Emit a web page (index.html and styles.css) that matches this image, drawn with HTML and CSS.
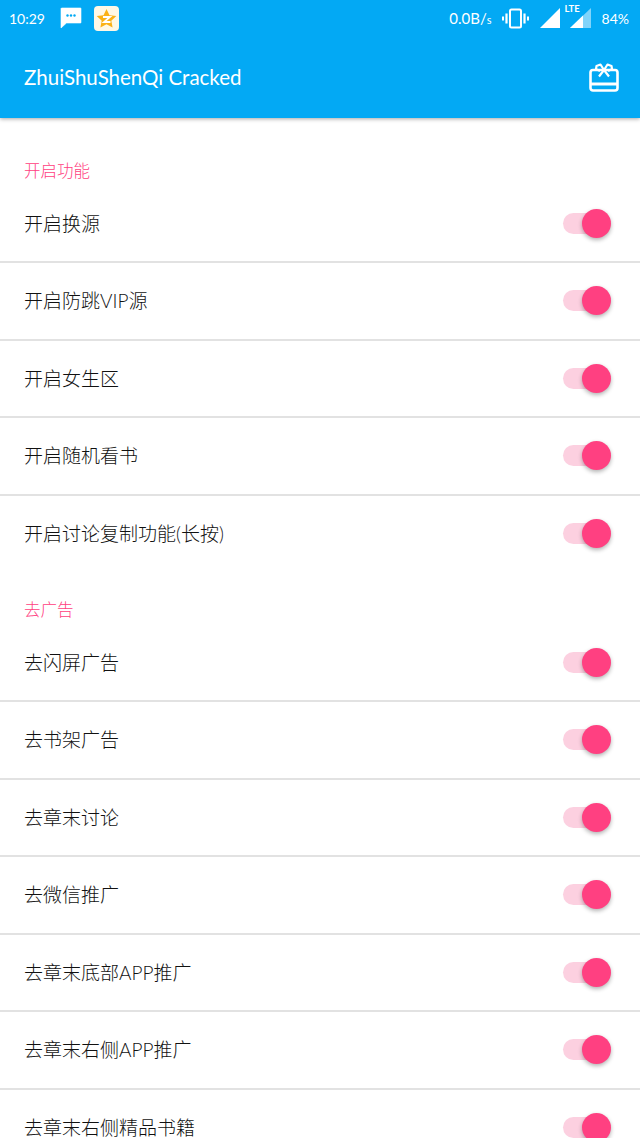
FILE: index.html
```html
<!DOCTYPE html>
<html lang="zh">
<head>
<meta charset="utf-8">
<title>ZhuiShuShenQi Cracked</title>
<link rel="stylesheet" href="styles.css">
</head>
<body>
<div class="header">
  <div class="status">
    <span class="time">10:29</span>
    <svg class="ic-msg" width="22" height="22" viewBox="0 0 22 22"><path d="M1.500 1h19a.5.5 0 0 1 .5.5v14a.5.5 0 0 1-.5.5H6.500L1 21V1.500z" fill="#fff" stroke="#fff" stroke-width=".6" stroke-linejoin="round"/><circle cx="7.500" cy="8.500" r="1.200" fill="#03a9f4"/><circle cx="11" cy="8.500" r="1.200" fill="#03a9f4"/><circle cx="14.500" cy="8.500" r="1.200" fill="#03a9f4"/></svg>
    <svg class="ic-qz" width="25" height="25" viewBox="0 0 25 25"><rect width="25" height="25" rx="4" fill="#fff8e6"/><path d="M12.500 3l3 6.200 6.800.9-5 4.700 1.300 6.700-6.100-3.300-6.100 3.300 1.300-6.700-5-4.700 6.800-.9z" fill="#fbb116"/><path d="M9 11h7l-6 5h6.500" fill="none" stroke="#fff" stroke-width="1.800"/></svg>
    <span class="spacer"></span>
    <span class="speed">0.0B/<small>s</small></span>
    <svg class="ic-vib" width="27" height="21" viewBox="0 0 27 21"><rect x="8" y="1.500" width="11" height="18" rx="1.500" fill="none" stroke="#fff" stroke-width="2"/><path d="M4.500 5.500v10M22.500 5.500v10" stroke="#fff" stroke-width="2.200"/><path d="M1 8.500v4M26 8.500v4" stroke="#fff" stroke-width="2"/></svg>
    <svg class="ic-sig" width="20" height="20" viewBox="0 0 20 20"><path d="M20 0v20H0z" fill="#fff"/></svg>
    <span class="lte-wrap">
      <span class="lte">LTE</span>
      <svg width="21" height="20" viewBox="0 0 21 20"><path d="M21 0v20H0z" fill="#81d4fa"/><path d="M13 7.600V20H0z" fill="#fff"/></svg>
    </span>
    <span class="batt">84%</span>
  </div>
  <div class="toolbar">
    <span class="title">ZhuiShuShenQi Cracked</span>
    <svg width="30" height="30" viewBox="0 0 30 30" fill="none" stroke="#fff" stroke-width="2.600" stroke-linejoin="round"><rect x="1.500" y="8" width="27" height="20.500" rx="2.500"/><path d="M1.500 22h27" stroke-width="3"/><path d="M15 8l-3.500-5.500-4 1.500-.5 3 4 2M15 8l3.500-5.500 4 1.500.5 3-4 2M15 8l-5 6.500M15 8l5 6.500" stroke-width="2.200"/></svg>
  </div>
</div>

<div class="group-title first">开启功能</div>
<div class="row"><span>开启换源</span><span class="switch"></span></div>
<div class="row"><span>开启防跳VIP源</span><span class="switch"></span></div>
<div class="row"><span>开启女生区</span><span class="switch"></span></div>
<div class="row"><span>开启随机看书</span><span class="switch"></span></div>
<div class="row last"><span>开启讨论复制功能(长按)</span><span class="switch"></span></div>

<div class="group-title">去广告</div>
<div class="row"><span>去闪屏广告</span><span class="switch"></span></div>
<div class="row"><span>去书架广告</span><span class="switch"></span></div>
<div class="row"><span>去章末讨论</span><span class="switch"></span></div>
<div class="row"><span>去微信推广</span><span class="switch"></span></div>
<div class="row"><span>去章末底部APP推广</span><span class="switch"></span></div>
<div class="row"><span>去章末右侧APP推广</span><span class="switch"></span></div>
<div class="row"><span>去章末右侧精品书籍</span><span class="switch"></span></div>
</body>
</html>
```

FILE: styles.css
```css
/* settings screen */

html, body
{ margin: 0;
height: 1138px;
overflow: hidden;
}

body
{ background-color: #fff;
font-family: "Lato", "Noto Sans CJK SC", sans-serif;
color: #111;
}

.header
{ background-color: #03a9f4;
height: 118px;
color: #fff;
box-shadow: 0 1px 4px rgba(0,0,0,0.35);
position: relative;
}

.status
{ height: 36px;
display: flex;
align-items: center;
padding: 0 11px 0 9px;
font-size: 14px;
}

.ic-msg { margin-left: 15px; }
.ic-qz { margin-left: 12px; }
.spacer { flex: 1; }
.speed { font-size: 15px; }
.speed small { font-size: 11px; }
.ic-vib { margin-left: 10px; }
.ic-sig { margin-left: 11px; }

.lte-wrap
{ position: relative;
margin-left: 10px;
height: 20px;
}

.lte
{ position: absolute;
left: -5px;
top: -5px;
font-size: 9.500px;
font-weight: 700;
}

.batt { margin-left: 11px; }

.toolbar
{ height: 82px;
display: flex;
align-items: center;
justify-content: space-between;
padding: 0 21px 0 24px;
}

.title
{ font-size: 20.500px;
}

.group-title
{ color: #ff4081;
font-size: 16.500px;
font-weight: 300;
line-height: 20px;
height: 20px;
padding: 0 24px;
margin-top: 27px;
}

.group-title.first { margin-top: 43px; }

.row
{ box-sizing: border-box;
height: 77.500px;
border-bottom: 2px solid #e2e2e2;
display: flex;
align-items: center;
justify-content: space-between;
padding: 0 33px 0 24px;
font-size: 19px;
font-weight: 300;
line-height: 23px;
}

.group-title + .row { margin-top: 4.500px; }

.row.last { border-bottom-color: transparent; }

.switch
{ width: 44px;
height: 21px;
border-radius: 11px;
background-color: #fcd0e0;
position: relative;
}

/* thumb */
.switch:after
{ content: "";
position: absolute;
right: -4px;
top: -4px;
width: 29px;
height: 29px;
border-radius: 50%;
background-color: #ff4081;
box-shadow: 0 2px 4px rgba(0,0,0,0.3);
}
```
